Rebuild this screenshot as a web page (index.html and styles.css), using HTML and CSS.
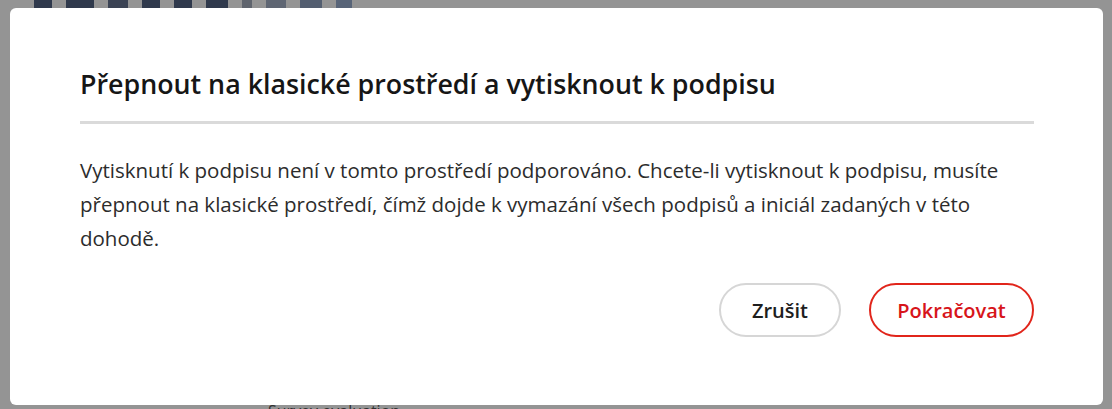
FILE: index.html
```html
<!DOCTYPE html>
<html lang="cs">
<head>
<meta charset="utf-8">
<link rel="stylesheet" href="styles.css">
</head>
<body>
<div class="page">
  <div class="page-top">
    <span class="blk b1"></span><span class="blk b2"></span><span class="blk b3"></span><span class="blk b4"></span><span class="blk b5"></span><span class="blk b6"></span><span class="blk b7"></span><span class="blk b8"></span><span class="blk b9"></span><span class="blk b10"></span>
  </div>
  <div class="page-bottom"><span class="survey">Survey evaluation</span></div>
</div>
<div class="overlay">
  <div class="dialog" role="dialog">
    <h1 class="title">Přepnout na klasické prostředí a vytisknout k podpisu</h1>
    <div class="divider"></div>
    <p class="body">Vytisknutí k podpisu není v tomto prostředí podporováno. Chcete-li vytisknout k podpisu, musíte přepnout na klasické prostředí, čímž dojde k vymazání všech podpisů a iniciál zadaných v této dohodě.</p>
    <div class="actions">
      <button class="btn btn-secondary">Zrušit</button>
      <button class="btn btn-primary">Pokračovat</button>
    </div>
  </div>
</div>
</body>
</html>
```
FILE: styles.css
```css
html, body {
  margin: 0;
  padding: 0;
  width: 1112px;
  height: 409px;
  overflow: hidden;
  font-family: "Open Sans", "Liberation Sans", sans-serif;
}
.page {
  position: absolute;
  inset: 0;
  background: #ffffff;
}
.page-top {
  display: flex;
  gap: 14px;
  padding: 0 0 0 34px;
  height: 10px;
  align-items: flex-start;
}
.blk {
  display: block;
  height: 10px;
  background: #1f3660;
}
.b1 { width: 18px; }
.b2 { width: 28px; }
.b3 { width: 20px; background: #3a4d72; }
.b4 { width: 18px; }
.b5 { width: 18px; }
.b6 { width: 22px; }
.b7 { width: 10px; background: #8a94a8; }
.b8 { width: 20px; background: #8a9ab5; }
.b9 { width: 22px; background: #6f88b0; }
.b10 { width: 16px; background: #7a95c0; }
.page-bottom {
  position: absolute;
  left: 0;
  right: 0;
  bottom: 0;
  height: 8px;
  overflow: hidden;
  padding-left: 268px;
}
.survey {
  font-size: 16px;
  line-height: 16px;
  color: #222;
  display: block;
  padding-top: 2px;
}
.overlay {
  position: absolute;
  inset: 0;
  background: rgba(60, 60, 60, 0.55);
  padding: 8px 9px 0 10px;
}
.dialog {
  background: #ffffff;
  border-radius: 6px;
  height: 397px;
  box-sizing: border-box;
  padding: 61px 69px 0 70px;
  display: flex;
  flex-direction: column;
}
.title {
  margin: 0;
  font-size: 26.8px;
  line-height: 30px;
  font-weight: 600;
  color: #161616;
}
.divider {
  margin-top: 22px;
  height: 3px;
  background: #dadada;
}
.body {
  margin: 29px 0 0 0;
  font-size: 20.5px;
  line-height: 34px;
  color: #2c2c2c;
}
.actions {
  margin-top: 28px;
  display: flex;
  justify-content: flex-end;
  gap: 28px;
}
.btn {
  height: 54px;
  border-radius: 27px;
  background: #ffffff;
  font-family: inherit;
  font-size: 20px;
  font-weight: 600;
  padding: 0;
  box-sizing: border-box;
}
.btn-secondary {
  width: 122px;
  border: 2px solid #d6d6d6;
  color: #1e1e1e;
}
.btn-primary {
  width: 165px;
  border: 2px solid #e1251b;
  color: #d7141a;
}
```
